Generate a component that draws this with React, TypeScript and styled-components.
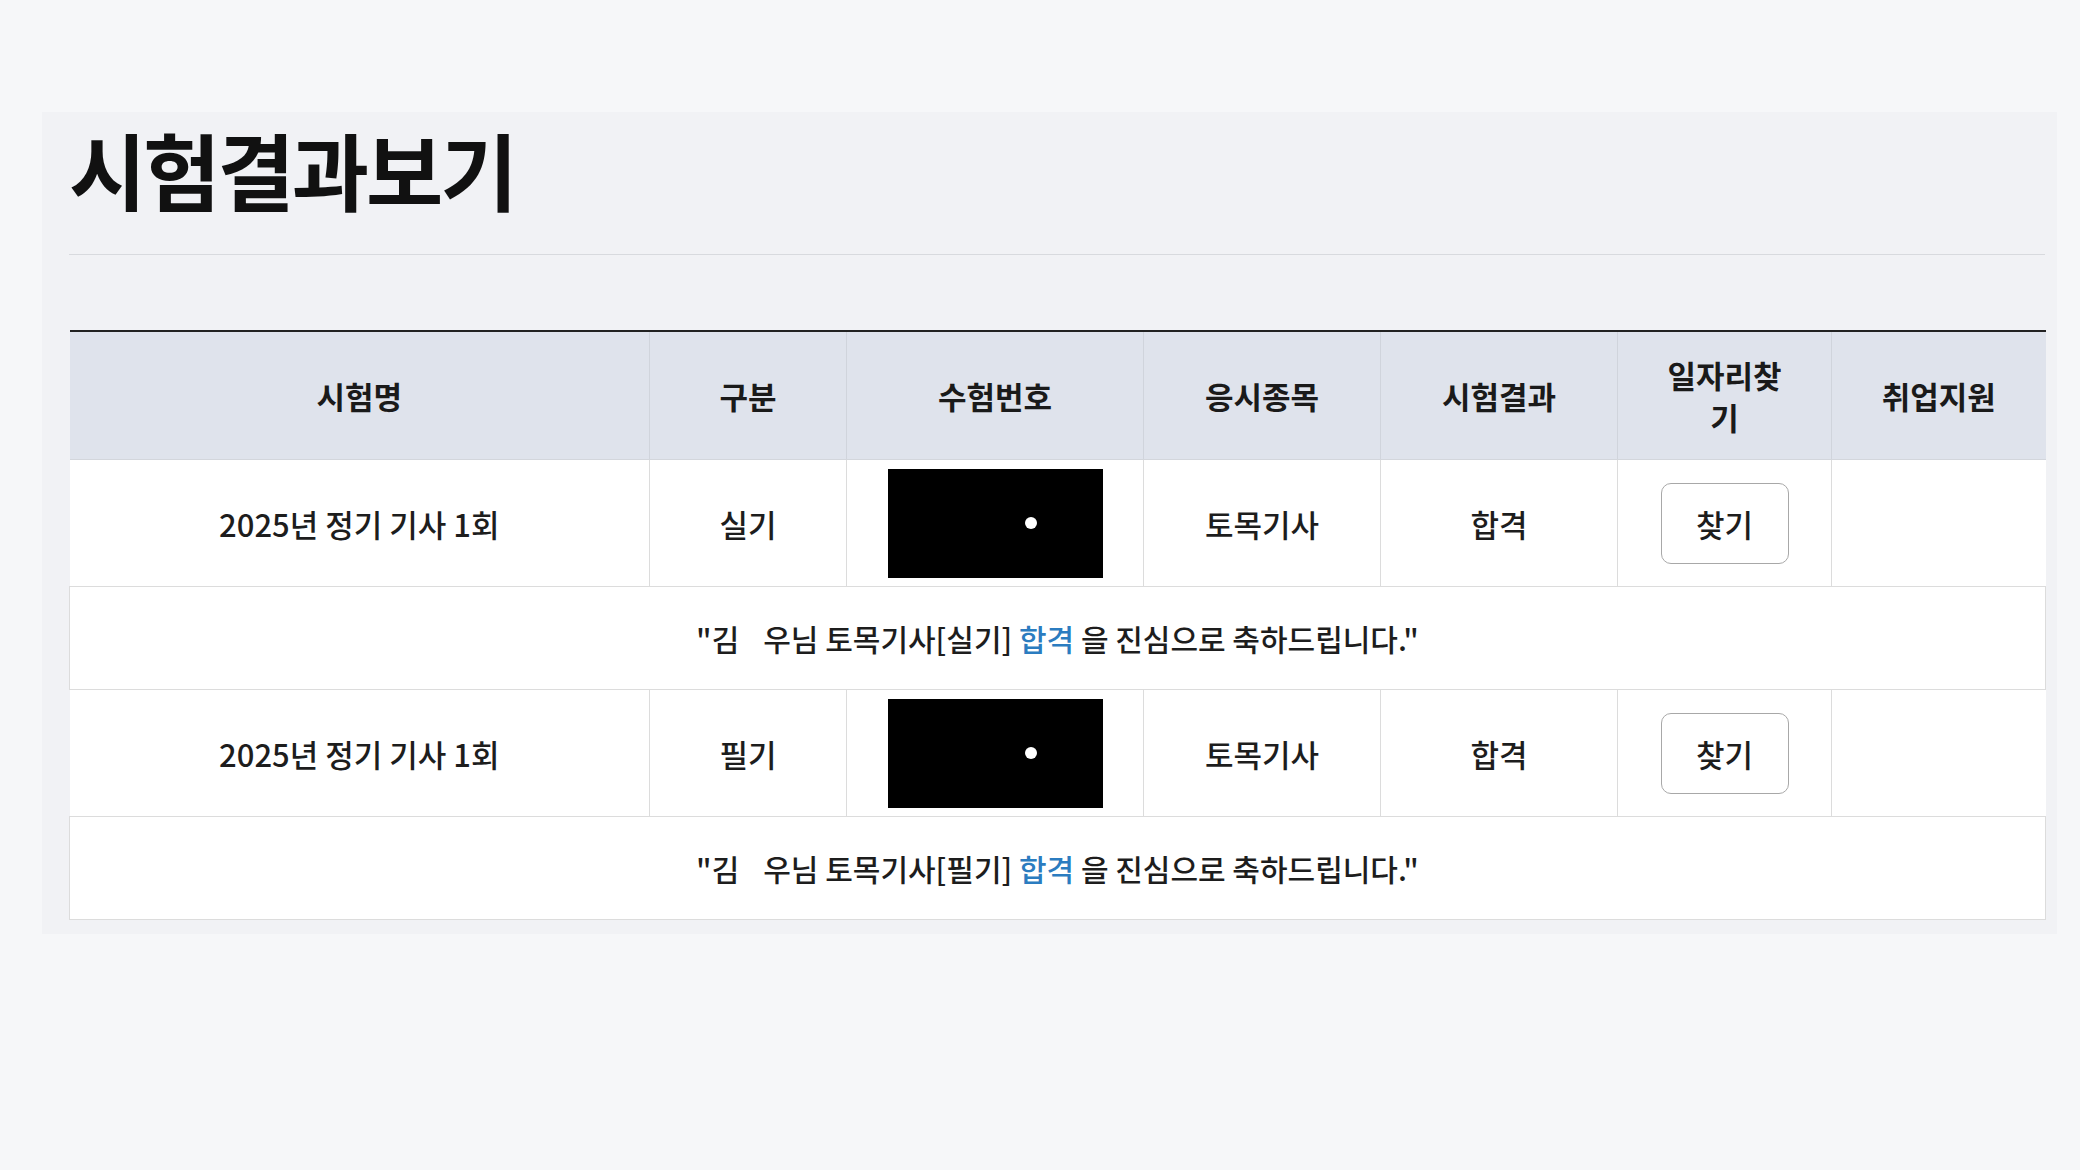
import styled, { createGlobalStyle } from "styled-components";

const GlobalStyle = createGlobalStyle`
  body {
    margin: 0;
    background: #f6f7f9;
    font-family: "Noto Sans CJK KR", "Noto Sans", sans-serif;
    color: #1d1d1d;
  }
`;

const Page = styled.div`
  padding: 112px 23px 238px 42px;
`;

const Panel = styled.section`
  background: #f1f2f5;
  padding: 9px 12px 14px 27px;
`;

const Title = styled.h1`
  margin: 0;
  font-size: 84px;
  line-height: 96px;
  font-weight: 700;
  letter-spacing: -3px;
  color: #111;
`;

const Divider = styled.hr`
  margin: 37px 0 0;
  border: 0;
  border-top: 1px solid #d8dade;
`;

const Table = styled.table`
  margin-top: 75px;
  width: 100%;
  border-collapse: collapse;
  table-layout: fixed;
  border-top: 2px solid #222;
`;

const HeadCell = styled.th`
  height: 127px;
  padding: 0 40px;
  background: #dfe3ec;
  font-size: 31px;
  font-weight: 700;
  line-height: 42px;
  color: #1a1a1a;
  border-left: 1px solid #d0d4dc;
  border-bottom: 1px solid #d3d6dc;

  &:first-child {
    border-left: 0;
  }
`;

const Cell = styled.td`
  height: 126px;
  padding: 0;
  background: #fff;
  text-align: center;
  font-size: 31px;
  font-weight: 500;
  border-left: 1px solid #dcdcdc;
  border-bottom: 1px solid #dcdcdc;

  &:first-child {
    border-left: 0;
  }
`;

const MessageCell = styled.td`
  height: 102px;
  padding: 0;
  background: #fff;
  text-align: center;
  font-size: 30px;
  font-weight: 500;
  border: 1px solid #dcdcdc;
`;

const Masked = styled.span`
  display: inline-block;
  width: 24px;
`;

const Pass = styled.span`
  color: #2b7cc0;
`;

const NumberBox = styled.div`
  box-sizing: border-box;
  width: 215px;
  height: 109px;
  margin: 0 auto;
  padding-left: 137px;
  display: flex;
  align-items: center;
  background: #000;
`;

const Dot = styled.span`
  width: 12px;
  height: 12px;
  border-radius: 50%;
  background: #fff;
`;

const FindButton = styled.button`
  width: 128px;
  height: 81px;
  border: 1.5px solid #a8a8a8;
  border-radius: 10px;
  background: #fff;
  font-family: inherit;
  font-size: 31px;
  font-weight: 500;
  color: #1d1d1d;
  cursor: pointer;
`;

const columns = [
  { label: "시험명", width: 580 },
  { label: "구분", width: 197 },
  { label: "수험번호", width: 297 },
  { label: "응시종목", width: 237 },
  { label: "시험결과", width: 237 },
  { label: "일자리찾기", width: 214 },
  { label: "취업지원", width: 214 },
];

const results = [
  { exam: "2025년 정기 기사 1회", type: "실기", subject: "토목기사", result: "합격" },
  { exam: "2025년 정기 기사 1회", type: "필기", subject: "토목기사", result: "합격" },
];

function App() {
  return (
    <>
      <GlobalStyle />
      <Page>
        <Panel>
          <Title>시험결과보기</Title>
          <Divider />
          <Table>
            <colgroup>
              {columns.map((c) => (
                <col key={c.label} style={{ width: c.width }} />
              ))}
            </colgroup>
            <thead>
              <tr>
                {columns.map((c) => (
                  <HeadCell key={c.label}>{c.label}</HeadCell>
                ))}
              </tr>
            </thead>
            <tbody>
              {results.map((r) => [
                <tr key={r.type}>
                  <Cell>{r.exam}</Cell>
                  <Cell>{r.type}</Cell>
                  <Cell>
                    <NumberBox>
                      <Dot />
                    </NumberBox>
                  </Cell>
                  <Cell>{r.subject}</Cell>
                  <Cell>{r.result}</Cell>
                  <Cell>
                    <FindButton>찾기</FindButton>
                  </Cell>
                  <Cell />
                </tr>,
                <tr key={r.type + "-msg"}>
                  <MessageCell colSpan={7}>
                    "김<Masked />우님 {r.subject}[{r.type}] <Pass>{r.result}</Pass> 을 진심으로
                    축하드립니다."
                  </MessageCell>
                </tr>,
              ])}
            </tbody>
          </Table>
        </Panel>
      </Page>
    </>
  );
}

export default App;
